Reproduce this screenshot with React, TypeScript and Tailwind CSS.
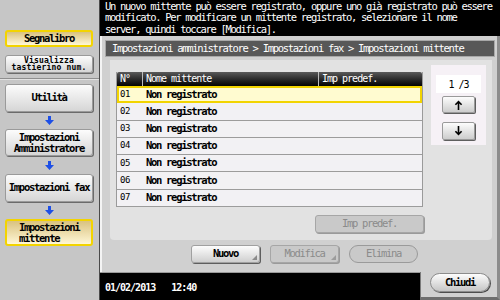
const mono = "font-['DejaVu_Sans_Mono','Liberation_Mono',monospace]";

const ROWS = ["01", "02", "03", "04", "05", "06", "07"];

function BlueArrow() {
  return (
    <svg width="9" height="9" viewBox="0 0 9 9" aria-hidden>
      <path d="M3 0h3v4h3L4.5 9 0 4h3z" fill="#1d4fe6" />
    </svg>
  );
}

function SideButton({
  children,
  active = false,
  className = "",
}: {
  children: React.ReactNode;
  active?: boolean;
  className?: string;
}) {
  const look = active
    ? "bg-gradient-to-b from-[#d9c27f] to-[#fff7d6] border-[#f3d400] border-2"
    : "bg-gradient-to-b from-[#fcfcfc] to-[#d6d6d6] border border-[#9a9a9a] shadow-[1px_1px_0_#6b6b6b]";
  return (
    <div
      className={`ml-[5px] w-[88px] rounded-[3px] flex items-center justify-center text-center text-black ${look} ${className}`}
    >
      {children}
    </div>
  );
}

function ArrowGap({ h }: { h: string }) {
  return (
    <div className={`${h} w-[98px] flex items-center justify-center`}>
      <BlueArrow />
    </div>
  );
}

function Sidebar() {
  return (
    <aside className="w-[100px] h-[300px] shrink-0 bg-[#c6c6c6] border-r border-[#4a4a4a] flex flex-col pt-[30px]">
      <SideButton active className="h-[17px] text-[10.5px] tracking-[-1.3px] font-bold">
        Segnalibro
      </SideButton>
      <SideButton className="mt-[8px] h-[18px] text-[8px] leading-[7.5px] tracking-[0.2px] font-bold">
        <span className="whitespace-nowrap">
          Visualizza
          <br />
          tastierino num.
        </span>
      </SideButton>
      <div className="mt-[5px] h-[2px] w-full border-t border-[#8f8f8f] border-b border-b-[#e2e2e2]" />
      <SideButton className="mt-[4px] h-[28px] text-[10.5px] tracking-[-1.3px] font-bold">
        Utilità
      </SideButton>
      <ArrowGap h="h-[17px]" />
      <SideButton className="h-[27px] text-[10.5px] leading-[11px] tracking-[-1.3px] font-bold">
        Impostazioni
        <br />
        Amministratore
      </SideButton>
      <ArrowGap h="h-[18px]" />
      <SideButton className="h-[28px] text-[10.5px] tracking-[-1.3px] font-bold">
        Impostazioni fax
      </SideButton>
      <ArrowGap h="h-[17px]" />
      <SideButton active className="h-[27px] text-[10.5px] leading-[11px] tracking-[-1.3px] font-bold !justify-start pl-[12px] text-left">
        Impostazioni
        <br />
        mittente
      </SideButton>
    </aside>
  );
}

function NavArrow({ up }: { up?: boolean }) {
  return (
    <svg width="9" height="10" viewBox="0 0 9 10" aria-hidden className={up ? "" : "rotate-180"}>
      <path d="M4.5 0.5 0.8 4.2 2 5.3 3.7 3.6V10h1.6V3.6L7 5.3 8.2 4.2z" fill="#000" />
    </svg>
  );
}

function Corner({ color }: { color: string }) {
  return (
    <svg width="5" height="5" viewBox="0 0 5 5" className="absolute right-[2px] bottom-[2px]" aria-hidden>
      <path d="M5 0v5H0z" fill={color} />
    </svg>
  );
}

function Panel() {
  return (
    <div className="flex flex-col h-[264px]">
      <div className="h-[236px] bg-[#d0d0d0] border-l-2 border-[#f4f4f4] border-r-[3px] border-r-[#8c8c8c] flex flex-col">
        {/* breadcrumb */}
        <div className="mt-[4px] ml-[3px] mr-[2px] h-[17px] bg-[#585858] border border-[#a8a8a8] text-white text-[10.5px] tracking-[-1.3px] leading-[15px] pl-[6px] whitespace-nowrap">
          Impostazioni amministratore &gt; Impostazioni fax &gt; Impostazioni mittente
        </div>

        {/* inner area */}
        <div className="mt-[3px] ml-[8px] mr-[5px] h-[180px] bg-[#e2e2e2] rounded-b-[4px] flex pl-[6px]">
          <div className="flex flex-col">
            <div className="mt-[12px] w-[307px] border-x border-[#9a9a9a]">
              <div className="h-[14px] flex bg-gradient-to-b from-[#5a5a5a] to-[#050505] text-white text-[10px] tracking-[-1px] leading-[14px] rounded-t-[2px]">
                <div className="w-[25px] pl-[3px]">N°</div>
                <div className="w-[176px] border-l border-[#bdbdbd] pl-[3px]">Nome mittente</div>
                <div className="flex-1 border-l border-[#bdbdbd] pl-[3px]">Imp predef.</div>
              </div>
              {ROWS.map((n, i) => (
                <div
                  key={n}
                  className={`h-[17.3px] flex items-center text-black ${
                    i === 0
                      ? "bg-[#fffbd0] border-2 border-[#f2d400]"
                      : "bg-[#f2f1f4] border-b border-[#9c9c9c]"
                  }`}
                >
                  <div className={`text-[9px] tracking-[-0.4px] ${i === 0 ? "w-[23px] pl-[1px]" : "w-[25px] pl-[3px]"}`}>{n}</div>
                  <div className="pl-[4px] text-[10.5px] tracking-[-1.3px] font-bold">Non registrato</div>
                </div>
              ))}
            </div>
            <div className="mt-[8px] ml-[199px] w-[109px] h-[18px] rounded-[3px] bg-[#c9c9c9] border border-[#a6a6a6] shadow-[1px_1px_0_#9a9a9a] text-[#8b8b8b] text-[10.5px] tracking-[-1.3px] flex items-center justify-center">
              Imp predef.
            </div>
          </div>

          {/* page nav */}
          <div className="mt-[5px] ml-[7px] w-[55px] h-[80px] bg-[#f6f1f6] flex flex-col items-center">
            <div className="mt-[10px] w-[45px] h-[18px] bg-white text-black text-[10px] tracking-[-1px] flex items-center justify-center">
              1 /3
            </div>
            <div className="mt-[3px] w-[33px] h-[17px] rounded-[2px] bg-gradient-to-b from-[#fdfdfd] to-[#cdcdcd] border border-[#9a9a9a] shadow-[1px_1px_0_#5e5e5e] flex items-center justify-center">
              <NavArrow up />
            </div>
            <div className="mt-[9px] w-[33px] h-[18px] rounded-[2px] bg-gradient-to-b from-[#fdfdfd] to-[#cdcdcd] border border-[#9a9a9a] shadow-[1px_1px_0_#5e5e5e] flex items-center justify-center">
              <NavArrow />
            </div>
          </div>
        </div>

        {/* actions */}
        <div className="mt-[5px] ml-[89px] flex gap-[10px] text-[10.5px] tracking-[-1.3px]">
          <div className="relative w-[69px] h-[18px] rounded-[3px] bg-gradient-to-b from-[#fdfdfd] to-[#cfcfcf] border border-[#a0a0a0] shadow-[1px_1px_0_#5e5e5e] text-black font-bold flex items-center justify-center">
            Nuovo
            <Corner color="#8a8a8a" />
          </div>
          <div className="relative w-[69px] h-[18px] rounded-[3px] bg-[#c9c9c9] border border-[#a6a6a6] shadow-[1px_1px_0_#9a9a9a] text-[#8b8b8b] flex items-center justify-center">
            Modifica
            <Corner color="#9c9c9c" />
          </div>
          <div className="w-[69px] h-[18px] rounded-full bg-[#c9c9c9] border border-[#9a9a9a] text-[#8b8b8b] flex items-center justify-center">
            Elimina
          </div>
        </div>
      </div>

      {/* footer */}
      <div className="flex h-[28px]">
        <div className="w-[320px] bg-black border-t border-[#9a9a9a] text-white font-bold text-[10px] tracking-[-1px] flex items-center pl-[5px] pt-[1px] whitespace-nowrap">
          <span>01/02/2013</span>
          <span className="ml-[16px]">12:40</span>
        </div>
        <div className="flex-1 bg-[#d0d0d0] border-l border-[#7a7a7a] border-r-[3px] border-r-[#8c8c8c] border-b-[3px] border-b-[#6e6e6e]">
          <div className="mt-[1px] ml-[9px] w-[60px] h-[19px] rounded-full bg-gradient-to-b from-[#fdfdfd] to-[#c6c6c6] border border-[#8c8c8c] shadow-[1px_1px_0_#4d4d4d] text-black font-bold text-[10.5px] tracking-[-1.3px] flex items-center justify-center">
            Chiudi
          </div>
        </div>
      </div>
    </div>
  );
}

export default function App() {
  return (
    <div className={`w-[500px] h-[300px] overflow-hidden flex bg-black ${mono}`}>
      <Sidebar />
      <div className="flex-1 flex flex-col">
        <div className="h-[36px] text-white text-[10.5px] tracking-[-1.3px] leading-[11.3px] pl-[5px] pt-[1px] whitespace-nowrap">
          Un nuovo mittente può essere registrato, oppure uno già registrato può essere
          <br />
          modificato. Per modificare un mittente registrato, selezionare il nome
          <br />
          server, quindi toccare [Modifica].
        </div>
        <Panel />
      </div>
    </div>
  );
}
